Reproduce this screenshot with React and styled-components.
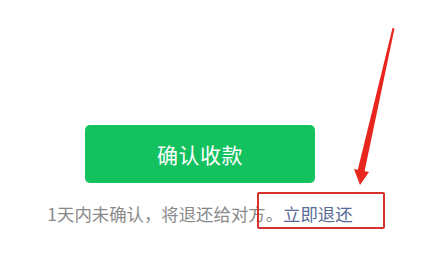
import React from 'react'
import styled, { createGlobalStyle } from 'styled-components'

const GlobalStyle = createGlobalStyle`
	html, body {
		margin: 0;
		padding: 0;
		background: #ffffff;
	}
	body {
		font-family: "Noto Sans CJK SC", "Noto Sans", sans-serif;
	}
`

export default function App() {
	return (
		<Page>
			<GlobalStyle />
			<Content>
				<ConfirmButton>确认收款</ConfirmButton>
				<Caption>
					1天内未确认，将退还给对方。<Link>立即退还</Link>
				</Caption>
			</Content>
			<Highlight />
			<Arrow width="428" height="271" viewBox="0 0 428 271">
				<polygon points="392.5,28 394.5,28.5 364,174 357,173" fill="#e8261e" />
				<polygon points="354,169 369,172 360,185" fill="#e8261e" />
			</Arrow>
		</Page>
	)
}

const Page = styled.div`
	position: relative;
	width: 428px;
	height: 271px;
	overflow: hidden;
	background: #fff;
`

const Content = styled.div`
	width: 400px;
	padding-top: 125px;
	display: flex;
	flex-direction: column;
	align-items: center;
	gap: 19px;
`

const ConfirmButton = styled.button`
	width: 230px;
	height: 58px;
	border: none;
	border-radius: 5px;
	background: #13c15f;
	color: #fff;
	font-family: "Noto Sans CJK SC", sans-serif;
	font-size: 21px;
	letter-spacing: 0.5px;
	padding: 0;
`

const Caption = styled.p`
	margin: 0;
	font-size: 17.4px;
	line-height: 24px;
	color: #8a8a8a;
	white-space: nowrap;
`

const Link = styled.span`
	color: #576b95;
`

const Highlight = styled.div`
	position: absolute;
	left: 257px;
	top: 192px;
	width: 128px;
	height: 37px;
	box-sizing: border-box;
	border: 2px solid #d6312c;
	border-radius: 2px;
`

const Arrow = styled.svg`
	position: absolute;
	left: 0;
	top: 0;
	pointer-events: none;
`
